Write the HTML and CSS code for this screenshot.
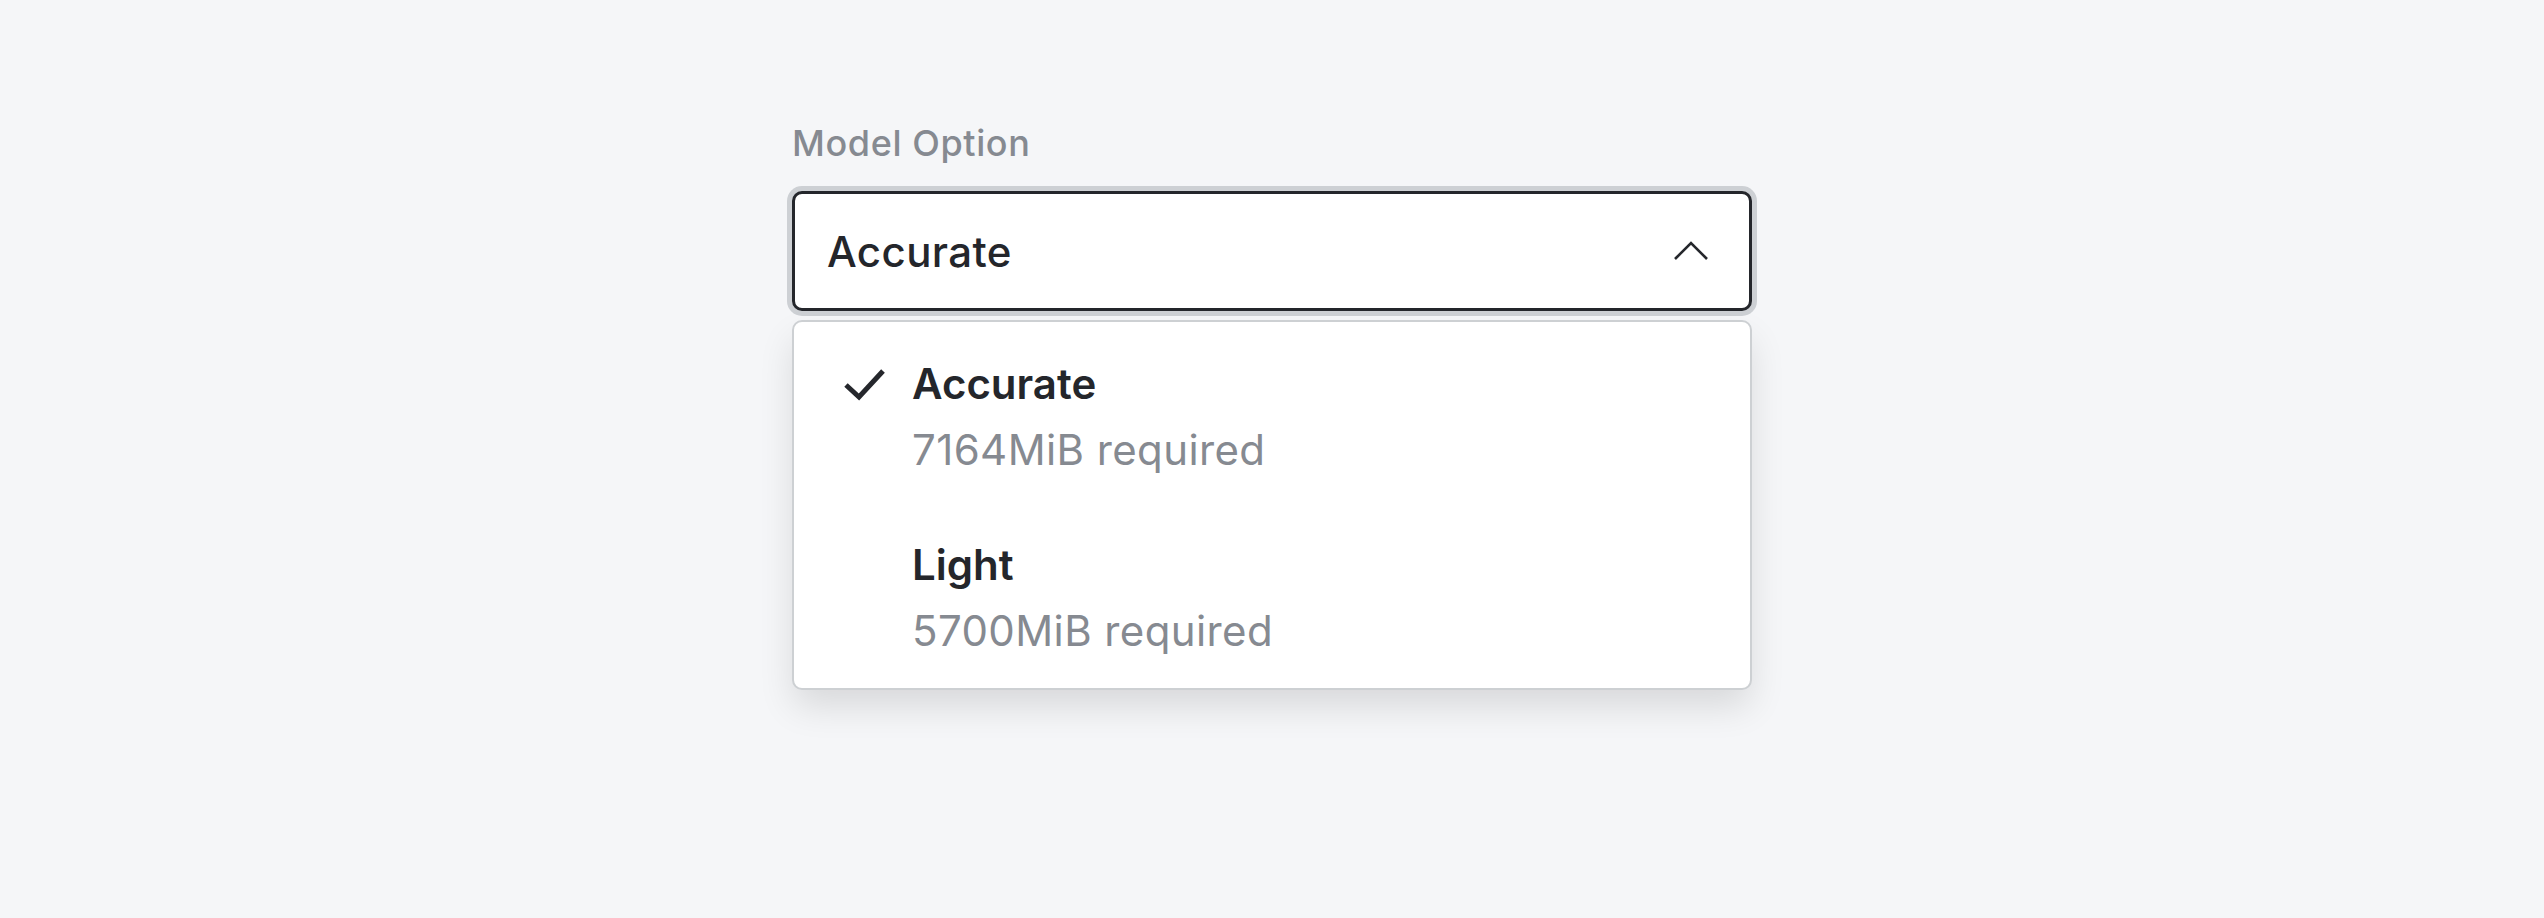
FILE: index.html
```html
<!DOCTYPE html>
<html>
<head>
  <title>Model Option</title>
  <link rel="stylesheet" href="styles.css">
</head>
<body>
  <div class="campo">
    <label class="rotulo">Model Option</label>
    <div class="seletor">
      <span class="seletor-valor">Accurate</span>
      <svg class="seta" width="36" height="20" viewBox="0 0 36 20">
        <polyline points="2,18 18,2 34,18" fill="none" stroke="#25272c" stroke-width="2.6"/>
      </svg>
    </div>

    <ul class="lista">
      <li class="opcao selecionada">
        <span class="marca">
          <svg width="44" height="36" viewBox="0 0 44 36">
            <polyline points="4,18 17,30 41,4" fill="none" stroke="#25272c" stroke-width="5"/>
          </svg>
        </span>
        <div class="opcao-texto">
          <div class="opcao-nome">Accurate</div>
          <div class="opcao-info">7164MiB required</div>
        </div>
      </li>
      <li class="opcao">
        <span class="marca"></span>
        <div class="opcao-texto">
          <div class="opcao-nome">Light</div>
          <div class="opcao-info">5700MiB required</div>
        </div>
      </li>
    </ul>
  </div>
</body>
</html>
```

FILE: styles.css
```css
body {
  margin: 0;
  min-height: 100vh;
  background: #f5f6f8;
  font-family: 'Inter', 'Noto Sans', sans-serif;
  color: #24262b;
}

.campo {
  width: 960px;
  margin: 0 auto;
  padding: 121px 0 120px;
}

.rotulo {
  display: block;
  font-size: 36px;
  line-height: 44px;
  font-weight: 500;
  letter-spacing: 0.6px;
  color: #868a91;
  margin-bottom: 26px;
}

.seletor {
  height: 120px;
  box-sizing: border-box;
  border: 3px solid #24262b;
  border-radius: 10px;
  background: white;
  box-shadow: 0 0 0 5px #cdd0d4;
  display: flex;
  align-items: center;
  justify-content: space-between;
  padding: 0 40px 0 32px;
}

.seletor-valor {
  font-size: 42px;
  font-weight: 500;
  letter-spacing: 0.4px;
}

.seta {
  display: block;
}

.lista {
  list-style: none;
  margin: 9px 0 0;
  padding: 4px 0 0;
  background: white;
  border: 2px solid #cdd0d3;
  border-radius: 10px;
  box-shadow: 0 18px 36px -2px rgba(0, 0, 0, 0.12);
}

.opcao {
  display: flex;
  padding: 25px 0 24px 48px;
  gap: 26px;
}

.marca {
  width: 44px;
  flex-shrink: 0;
  padding-top: 16px;
}

.marca svg {
  display: block;
}

.opcao-nome {
  font-size: 42px;
  line-height: 66px;
  font-weight: 600;
}

.opcao-info {
  font-size: 42px;
  line-height: 66px;
  letter-spacing: 0.4px;
  color: #868a91;
}
```
